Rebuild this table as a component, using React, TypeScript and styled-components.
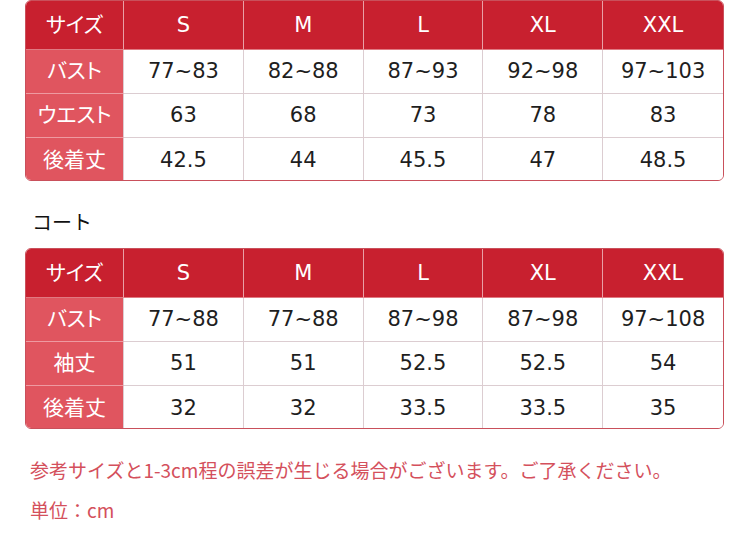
import React from "react";
import styled, { createGlobalStyle } from "styled-components";

const Global = createGlobalStyle`
  html, body { margin: 0; padding: 0; background: #fff; }
  body { font-family: "Noto Sans CJK JP", "Noto Sans", sans-serif; }
`;

const Page = styled.div`
  width: 750px;
  height: 550px;
  padding: 0 26px 0 25px;
  box-sizing: border-box;
  display: flex;
  flex-direction: column;
  overflow: hidden;
`;

const Table = styled.div`
  display: grid;
  grid-template-columns: 98px repeat(5, 1fr);
  grid-template-rows: 49px repeat(3, 44px);
  border: 1px solid #c9505b;
  border-radius: 6px;
  overflow: hidden;
  box-sizing: border-box;
  height: 181px;
`;

const Cell = styled.div<{ $kind: "corner" | "head" | "label" | "data"; $lastCol?: boolean; $lastRow?: boolean }>`
  display: flex;
  align-items: center;
  justify-content: center;
  font-family: "DejaVu Sans", "Noto Sans CJK JP", sans-serif;
  font-feature-settings: "palt";
  font-size: 21px;
  line-height: 1;
  box-sizing: border-box;
  background: ${(p) =>
    p.$kind === "corner" || p.$kind === "head" ? "#c8202f" : p.$kind === "label" ? "#e0555f" : "#fff"};
  color: ${(p) => (p.$kind === "data" ? "#1e1e1e" : "#fff")};
  border-right: ${(p) =>
    p.$lastCol ? "none" : p.$kind === "head" || p.$kind === "corner" ? "1px solid #e9a0a6" : "1px solid #dccdd1"};
  border-bottom: ${(p) =>
    p.$lastRow ? "none" : p.$kind === "head" || p.$kind === "corner" ? "1px solid #e07a82" : p.$kind === "label" ? "1px solid #ee9aa1" : "1px solid #dccdd1"};
`;

const Title = styled.div`
  font-size: 20px;
  color: #111;
  padding: 30px 0 0 7px;
  height: 67px;
  box-sizing: border-box;
  line-height: 22px;
`;

const Notes = styled.div`
  display: flex;
  flex-direction: column;
  gap: 18px;
  padding: 30px 0 0 5px;
  color: #d4505c;
  font-size: 19px;
  line-height: 22px;
`;

const sizes = ["S", "M", "L", "XL", "XXL"];

type Row = { label: string; values: string[] };

const SizeTable = ({ rows }: { rows: Row[] }) => (
  <Table>
    <Cell $kind="corner">サイズ</Cell>
    {sizes.map((s, i) => (
      <Cell key={s} $kind="head" $lastCol={i === sizes.length - 1}>
        {s}
      </Cell>
    ))}
    {rows.map((r, ri) => (
      <React.Fragment key={r.label}>
        <Cell $kind="label" $lastRow={ri === rows.length - 1}>
          {r.label}
        </Cell>
        {r.values.map((v, i) => (
          <Cell
            key={i}
            $kind="data"
            $lastCol={i === r.values.length - 1}
            $lastRow={ri === rows.length - 1}
          >
            {v}
          </Cell>
        ))}
      </React.Fragment>
    ))}
  </Table>
);

const top: Row[] = [
  { label: "バスト", values: ["77~83", "82~88", "87~93", "92~98", "97~103"] },
  { label: "ウエスト", values: ["63", "68", "73", "78", "83"] },
  { label: "後着丈", values: ["42.5", "44", "45.5", "47", "48.5"] },
];

const coat: Row[] = [
  { label: "バスト", values: ["77~88", "77~88", "87~98", "87~98", "97~108"] },
  { label: "袖丈", values: ["51", "51", "52.5", "52.5", "54"] },
  { label: "後着丈", values: ["32", "32", "33.5", "33.5", "35"] },
];

export default function App() {
  return (
    <>
      <Global />
      <Page>
        <SizeTable rows={top} />
        <Title>コート</Title>
        <SizeTable rows={coat} />
        <Notes>
          <div>参考サイズと1-3cm程の誤差が生じる場合がございます。ご了承ください。</div>
          <div>単位：cm</div>
        </Notes>
      </Page>
    </>
  );
}
